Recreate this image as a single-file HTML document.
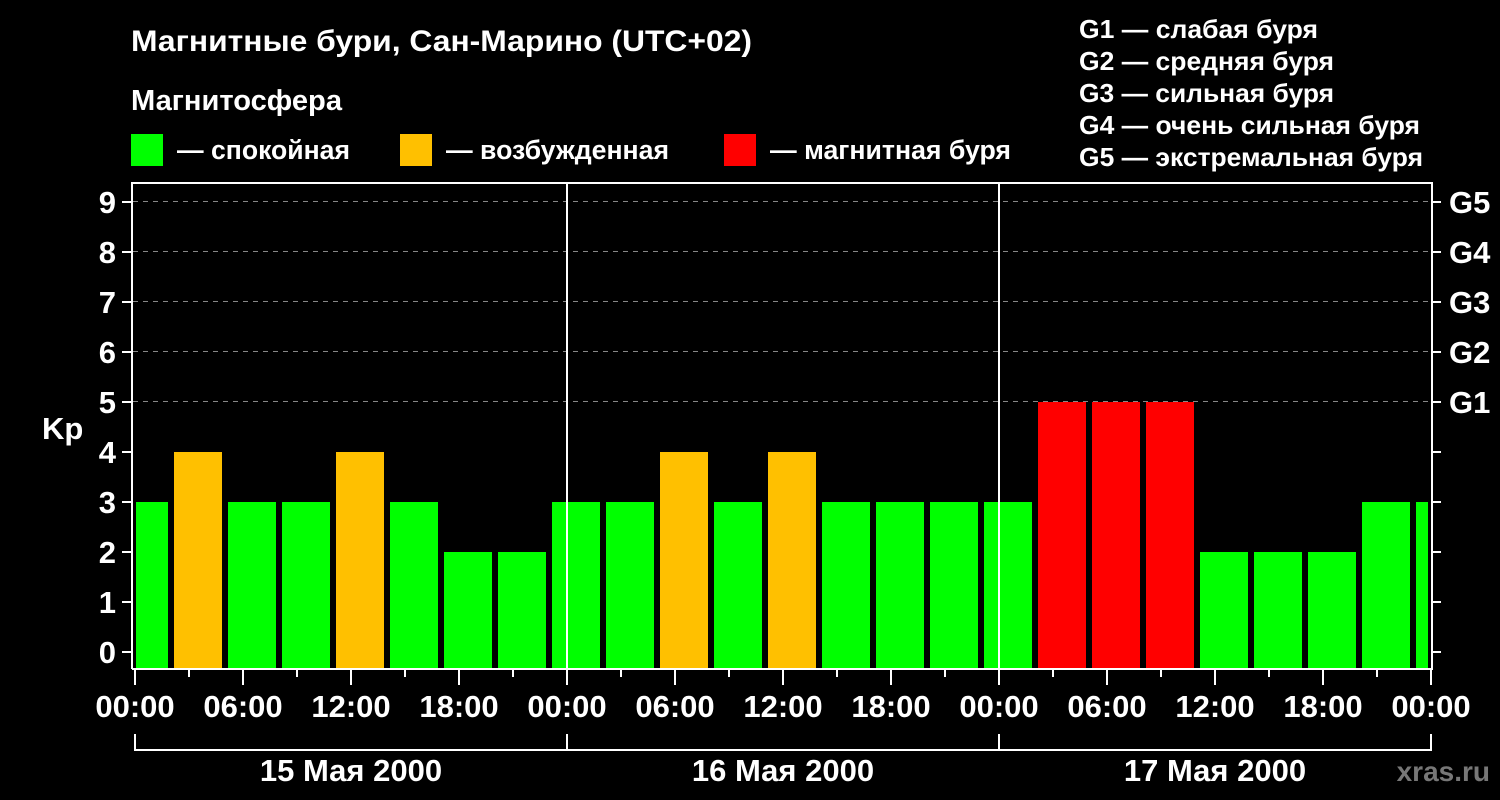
<!DOCTYPE html>
<html><head><meta charset="utf-8"><style>body{margin:0;background:#000}svg{display:block}text{font-family:"Liberation Sans",sans-serif;font-weight:bold;fill:#fff}</style></head><body>
<svg width="1500" height="800" xmlns="http://www.w3.org/2000/svg">
<rect width="1500" height="800" fill="#000"/>
<text x="131" y="51" font-size="30" textLength="621" lengthAdjust="spacingAndGlyphs">Магнитные бури, Сан-Марино (UTC+02)</text>
<text x="131" y="110" font-size="29" textLength="211" lengthAdjust="spacingAndGlyphs">Магнитосфера</text>
<rect x="131" y="134" width="32" height="32" fill="#00ff00"/><text x="177" y="159" font-size="27" textLength="173" lengthAdjust="spacingAndGlyphs">— спокойная</text>
<rect x="400" y="134" width="32" height="32" fill="#ffc000"/><text x="446" y="159" font-size="27" textLength="223" lengthAdjust="spacingAndGlyphs">— возбужденная</text>
<rect x="724" y="134" width="32" height="32" fill="#ff0000"/><text x="770" y="159" font-size="27" textLength="241" lengthAdjust="spacingAndGlyphs">— магнитная буря</text>
<g font-size="26"><text x="1079" y="38" textLength="239" lengthAdjust="spacingAndGlyphs">G1 — слабая буря</text><text x="1079" y="70" textLength="255" lengthAdjust="spacingAndGlyphs">G2 — средняя буря</text><text x="1079" y="102" textLength="255" lengthAdjust="spacingAndGlyphs">G3 — сильная буря</text><text x="1079" y="134" textLength="341" lengthAdjust="spacingAndGlyphs">G4 — очень сильная буря</text><text x="1079" y="166" textLength="344" lengthAdjust="spacingAndGlyphs">G5 — экстремальная буря</text></g>
<g stroke="#888" stroke-width="1" stroke-dasharray="5,5"><line x1="133" y1="201.5" x2="1431" y2="201.5"/><line x1="133" y1="251.5" x2="1431" y2="251.5"/><line x1="133" y1="301.5" x2="1431" y2="301.5"/><line x1="133" y1="351.5" x2="1431" y2="351.5"/><line x1="133" y1="401.5" x2="1431" y2="401.5"/></g>
<g>
<rect x="136" y="502" width="32" height="166" fill="#00ff00"/>
<rect x="174" y="452" width="48" height="216" fill="#ffc000"/>
<rect x="228" y="502" width="48" height="166" fill="#00ff00"/>
<rect x="282" y="502" width="48" height="166" fill="#00ff00"/>
<rect x="336" y="452" width="48" height="216" fill="#ffc000"/>
<rect x="390" y="502" width="48" height="166" fill="#00ff00"/>
<rect x="444" y="552" width="48" height="116" fill="#00ff00"/>
<rect x="498" y="552" width="48" height="116" fill="#00ff00"/>
<rect x="552" y="502" width="48" height="166" fill="#00ff00"/>
<rect x="606" y="502" width="48" height="166" fill="#00ff00"/>
<rect x="660" y="452" width="48" height="216" fill="#ffc000"/>
<rect x="714" y="502" width="48" height="166" fill="#00ff00"/>
<rect x="768" y="452" width="48" height="216" fill="#ffc000"/>
<rect x="822" y="502" width="48" height="166" fill="#00ff00"/>
<rect x="876" y="502" width="48" height="166" fill="#00ff00"/>
<rect x="930" y="502" width="48" height="166" fill="#00ff00"/>
<rect x="984" y="502" width="48" height="166" fill="#00ff00"/>
<rect x="1038" y="402" width="48" height="266" fill="#ff0000"/>
<rect x="1092" y="402" width="48" height="266" fill="#ff0000"/>
<rect x="1146" y="402" width="48" height="266" fill="#ff0000"/>
<rect x="1200" y="552" width="48" height="116" fill="#00ff00"/>
<rect x="1254" y="552" width="48" height="116" fill="#00ff00"/>
<rect x="1308" y="552" width="48" height="116" fill="#00ff00"/>
<rect x="1362" y="502" width="48" height="166" fill="#00ff00"/>
<rect x="1416" y="502" width="12" height="166" fill="#00ff00"/>
</g>
<g stroke="#fff" stroke-width="2" fill="none">
<path d="M132 669V183H1432V669H132"/>
<line x1="567" y1="183" x2="567" y2="668"/><line x1="999" y1="183" x2="999" y2="668"/>
<path d="M122 202h10M122 252h10M122 302h10M122 352h10M122 402h10M122 452h10M122 502h10M122 552h10M122 602h10M122 652h10"/>
<path d="M1432 202h9M1432 252h9M1432 302h9M1432 352h9M1432 402h9M1432 452h9M1432 502h9M1432 552h9M1432 602h9M1432 652h9"/>
<path d="M135 669v16M189 669v8M243 669v16M297 669v8M351 669v16M405 669v8M459 669v16M513 669v8M567 669v16M621 669v8M675 669v16M729 669v8M783 669v16M837 669v8M891 669v16M945 669v8M999 669v16M1053 669v8M1107 669v16M1161 669v8M1215 669v16M1269 669v8M1323 669v16M1377 669v8M1431 669v16"/>
<path d="M135 734v16H1431V734M567 734v16M999 734v16"/>
</g>
<g font-size="31" text-anchor="end"><text x="116" y="213">9</text><text x="116" y="263">8</text><text x="116" y="313">7</text><text x="116" y="363">6</text><text x="116" y="413">5</text><text x="116" y="463">4</text><text x="116" y="513">3</text><text x="116" y="563">2</text><text x="116" y="613">1</text><text x="116" y="663">0</text></g>
<text x="42" y="439" font-size="31">Kp</text>
<g font-size="31"><text x="1449" y="213">G5</text><text x="1449" y="263">G4</text><text x="1449" y="313">G3</text><text x="1449" y="363">G2</text><text x="1449" y="413">G1</text></g>
<g font-size="31" text-anchor="middle"><text x="135" y="717">00:00</text><text x="243" y="717">06:00</text><text x="351" y="717">12:00</text><text x="459" y="717">18:00</text><text x="567" y="717">00:00</text><text x="675" y="717">06:00</text><text x="783" y="717">12:00</text><text x="891" y="717">18:00</text><text x="999" y="717">00:00</text><text x="1107" y="717">06:00</text><text x="1215" y="717">12:00</text><text x="1323" y="717">18:00</text><text x="1431" y="717">00:00</text></g>
<g font-size="31" text-anchor="middle"><text x="351" y="781">15 Мая 2000</text><text x="783" y="781">16 Мая 2000</text><text x="1215" y="781">17 Мая 2000</text></g>
<text x="1490" y="781" font-size="28" text-anchor="end" style="fill:#777">xras.ru</text>
</svg>
</body></html>
